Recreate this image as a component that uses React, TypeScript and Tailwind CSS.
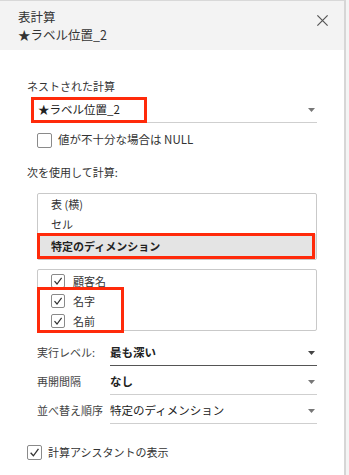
import React from 'react';

const font = { fontFamily: '"Noto Sans CJK JP", "Noto Sans", sans-serif' };

const Check = ({ checked, size = 14 }: { checked: boolean; size?: number }) => (
  <span
    className="inline-flex items-center justify-center border border-[#8a8a8a] rounded-[2px] bg-white shrink-0"
    style={{ width: size, height: size }}
  >
    {checked && (
      <svg width={size - 4} height={size - 4} viewBox="0 0 10 10">
        <path d="M1.5 5.2 L4 8 L8.6 1.8" fill="none" stroke="#333" strokeWidth="1.2" />
      </svg>
    )}
  </span>
);

const Arrow = ({ dark }: { dark?: boolean }) => (
  <svg width="7" height="4" viewBox="0 0 7 4" className="shrink-0">
    <path d="M0 0 H7 L3.5 4 Z" fill={dark ? '#444' : '#777'} />
  </svg>
);

const Field = ({ label, value, bold, dark }: { label: string; value: string; bold?: boolean; dark?: boolean }) => (
  <div className="flex items-end h-[29px]">
    <div className="w-[83px] pl-[10px] pb-[6px] text-[11px] text-[#444] whitespace-nowrap">{label}</div>
    <div
      className={`flex-1 flex items-center justify-between h-[26px] pr-[2px] border-b ${
        dark ? 'border-[#555]' : 'border-[#cfcfcf]'
      }`}
    >
      <span className={`text-[11.5px] text-[#222] ${bold ? 'font-bold' : ''}`}>{value}</span>
      <Arrow dark={dark} />
    </div>
  </div>
);

export default function App() {
  return (
    <div className="w-[349px] h-[475px] bg-[#f4f4f4] text-[#333]" style={font}>
      <div className="w-[346px] h-full bg-white border-r-2 border-[#d6d6d6]">
        <div className="h-[50px] bg-[#f3f3f3] border-t border-[#d8d8d8] flex justify-between pl-[18px] pr-[15px] pt-[7px]">
          <div className="text-[12.5px] leading-[18px] text-[#333]">
            <div>表計算</div>
            <div>★ラベル位置_2</div>
          </div>
          <svg width="13" height="13" viewBox="0 0 14 14" className="mt-[6px]">
            <path d="M1.5 1.5 L12.5 12.5 M12.5 1.5 L1.5 12.5" stroke="#555" strokeWidth="1.3" />
          </svg>
        </div>

        <div className="pl-[27px] pr-[27px]">
          <div className="mt-[27px] text-[11px] leading-[18px]">ネストされた計算</div>

          <div className="relative ml-[4px] mt-[2px] h-[26px] flex items-center justify-between border-b border-[#cfcfcf] pl-[7px] pr-[2px]">
            <span className="text-[11.5px] text-[#222]">★ラベル位置_2</span>
            <Arrow />
            <div className="absolute left-0 top-0 w-[116px] h-[26px] border-[3px] border-[#ff2a0a]" />
          </div>

          <div className="ml-[10px] mt-[8px] flex items-center gap-[6px] h-[18px]">
            <Check checked={false} size={15} />
            <span className="text-[11.5px] text-[#333]">値が不十分な場合は NULL</span>
          </div>

          <div className="mt-[14px] text-[11px] leading-[18px]">次を使用して計算:</div>

          <div className="ml-[10px] mt-[12px] border border-[#c9c9c9] rounded-[2px] pb-[1px]">
            <div className="h-[20px] flex items-center pl-[13px] text-[11px]">表 (横)</div>
            <div className="h-[20px] flex items-center pl-[13px] text-[11px]">セル</div>
            <div className="relative h-[24px] flex items-center pl-[13px] bg-[#e4e4e4] text-[11px] font-bold text-[#222]">
              特定のディメンション
              <div className="absolute -left-px -top-[1px] right-[1px] h-[26px] border-[3px] border-[#ff2a0a]" />
            </div>
          </div>

          <div className="relative ml-[10px] mt-[9px] border border-[#c9c9c9] rounded-[2px] h-[62px] pt-[1px]">
            {['顧客名', '名字', '名前'].map(n => (
              <div key={n} className="h-[20px] flex items-center gap-[8px] pl-[13px]">
                <Check checked={true} size={14} />
                <span className="text-[11px]">{n}</span>
              </div>
            ))}
            <div className="absolute -left-px top-[17px] w-[87px] h-[46px] border-[3px] border-[#ff2a0a]" />
          </div>

          <div className="mt-[6px]">
            <Field label="実行レベル:" value="最も深い" bold dark />
            <Field label="再開間隔" value="なし" bold />
            <Field label="並べ替え順序" value="特定のディメンション" />
          </div>

          <div className="mt-[19px] flex items-center gap-[6px] h-[18px]">
            <Check checked={true} size={15} />
            <span className="text-[11px]">計算アシスタントの表示</span>
          </div>
        </div>
      </div>
    </div>
  );
}
